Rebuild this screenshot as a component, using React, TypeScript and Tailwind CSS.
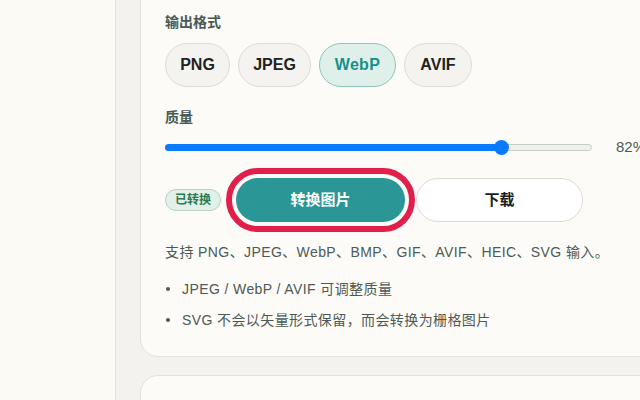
import React from "react";

const formats = [
  { name: "PNG", w: "w-[65px]", active: false },
  { name: "JPEG", w: "w-[73px]", active: false },
  { name: "WebP", w: "w-[77px]", active: true },
  { name: "AVIF", w: "w-[68px]", active: false },
];

export default function App() {
  return (
    <div className="w-[640px] h-[400px] overflow-hidden flex bg-[#f3f2ee] font-['Liberation_Sans','Noto_Sans_CJK_SC',sans-serif] text-[#4d5a56]">
      <aside className="w-[116px] shrink-0 border-r border-[#e4e3dd] bg-[#fbfaf5] bg-[radial-gradient(#ebe9df_0.6px,transparent_0.7px)] bg-[length:4px_4px]" />
      <main className="flex-1 -mt-[20px] pl-[24px] flex flex-col">
        <section className="w-[560px] shrink-0 rounded-[18px] border border-[#e2e1db] bg-[#fcfbf7] pl-[24px] pt-[31px] pb-[26px]">
          <div className="text-[14px] leading-[20px] font-bold text-[#4b5955]">输出格式</div>
          <div className="mt-[11px] flex gap-[8px]">
            {formats.map((f) => (
              <button
                key={f.name}
                className={
                  f.active
                    ? `${f.w} h-[44px] rounded-full border border-[#8ec6bc] bg-[#dff0ea] text-[16px] font-bold text-[#16908a] tracking-[0.3px]`
                    : `${f.w} h-[44px] rounded-full border border-[#dddcd6] bg-[#f4f3ef] text-[16px] font-bold text-[#1e2321]`
                }
              >
                {f.name}
              </button>
            ))}
          </div>

          <div className="mt-[20px] text-[14px] leading-[20px] font-bold text-[#4b5955]">质量</div>
          <div className="mt-[12px] h-[16px] flex items-center">
            <div className="relative w-[427px] h-[16px] flex items-center">
              <div className="absolute inset-x-0 h-[7px] rounded-full border border-[#c8cbc5] bg-[#efefeb]" />
              <div className="absolute left-0 h-[7px] w-[337px] rounded-full bg-[#0a7bff]" />
              <div className="absolute left-[329px] w-[15px] h-[15px] rounded-full bg-[#0a7bff]" />
            </div>
            <span className="ml-[24px] text-[15px] text-[#4b5955]">82%</span>
          </div>

          <div className="mt-[23px] h-[44px] flex items-center">
            <span className="w-[56px] h-[22px] flex items-center justify-center rounded-full border border-[#b8d3c5] bg-[#e3efe9] text-[12px] font-bold text-[#2b7b52]">
              已转换
            </span>
            <button className="ml-[15px] w-[169px] h-[44px] rounded-full bg-[#2a9695] text-[15px] font-bold text-white outline outline-[6px] outline-[#e11f4b] outline-offset-[4px]">
              转换图片
            </button>
            <button className="ml-[11px] w-[167px] h-[44px] rounded-full border border-[#dcdbd5] bg-white text-[15px] font-bold text-[#1c1e1d]">
              下载
            </button>
          </div>

          <p className="mt-[20px] text-[14px] leading-[20px] tracking-[0.4px] text-[#4d5a56]">
            支持 PNG、JPEG、WebP、BMP、GIF、AVIF、HEIC、SVG 输入。
          </p>
          <ul className="mt-[17px] text-[14px] leading-[20px] tracking-[0.4px] text-[#4d5a56]">
            <li className="flex items-center">
              <span className="ml-[1px] w-[4px] h-[4px] rounded-full bg-[#4d5a56]" />
              <span className="ml-[12px]">JPEG / WebP / AVIF 可调整质量</span>
            </li>
            <li className="mt-[11px] flex items-center">
              <span className="ml-[1px] w-[4px] h-[4px] rounded-full bg-[#4d5a56]" />
              <span className="ml-[12px]">SVG 不会以矢量形式保留，而会转换为栅格图片</span>
            </li>
          </ul>
        </section>
        <section className="mt-[18px] w-[560px] h-[200px] shrink-0 rounded-[18px] border border-[#e2e1db] bg-[#fcfbf7]" />
      </main>
    </div>
  );
}
